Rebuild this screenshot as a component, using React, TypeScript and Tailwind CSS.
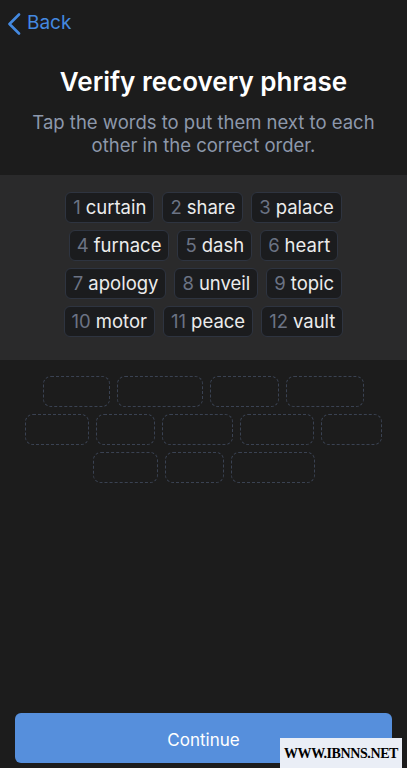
const rows: [number, string][][] = [
  [[1, "curtain"], [2, "share"], [3, "palace"]],
  [[4, "furnace"], [5, "dash"], [6, "heart"]],
  [[7, "apology"], [8, "unveil"], [9, "topic"]],
  [[10, "motor"], [11, "peace"], [12, "vault"]],
];

// widths of the empty drop slots, row by row
const slots = [
  ["w-[67px]", "w-[86px]", "w-[69px]", "w-[78px]"],
  ["w-[64px]", "w-[59px]", "w-[71px]", "w-[74px]", "w-[61px]"],
  ["w-[65px]", "w-[59px]", "w-[84px]"],
];

function WordChip({ n, word }: { n: number; word: string }) {
  return (
    <div className="flex h-[31px] items-center gap-[5px] rounded-md border border-[#2e3440] bg-[#1b1c1e] px-[7px] text-[18.5px] leading-none">
      <span className="text-[#6b7384]">{n}</span>
      <span className="text-[#ececec]">{word}</span>
    </div>
  );
}

export default function App() {
  return (
    <div
      className="relative flex h-[768px] w-full flex-col overflow-hidden bg-[#1c1c1c]"
      style={{ fontFamily: "Inter, 'Noto Sans', sans-serif" }}
    >
      <header className="flex h-[47px] items-center gap-[6px] pl-[7px] text-[#4489e0]">
        <svg width="14" height="22" viewBox="0 0 14 22" fill="none">
          <path
            d="M12 1.5 2.5 11 12 20.5"
            stroke="currentColor"
            strokeWidth="2.6"
            strokeLinecap="round"
            strokeLinejoin="round"
          />
        </svg>
        <span className="text-[19px]">Back</span>
      </header>

      <h1 className="mt-[19px] text-center text-[26px] font-semibold leading-[32px] text-white">
        Verify recovery phrase
      </h1>
      <p className="mx-auto mt-[13px] max-w-[370px] text-center text-[18.5px] leading-[23px] text-[#8d98ab]">
        Tap the words to put them next to each other in the correct order.
      </p>

      <section className="mt-[18px] flex h-[185px] flex-col items-center gap-[7px] bg-[#2a2a2b] pt-[17px]">
        {rows.map((row, i) => (
          <div key={i} className="flex gap-[8px]">
            {row.map(([n, w]) => (
              <WordChip key={n} n={n} word={w} />
            ))}
          </div>
        ))}
      </section>

      <div className="mt-[16px] flex flex-col items-center gap-[7px]">
        {slots.map((row, i) => (
          <div key={i} className="flex gap-[7px]">
            {row.map((w, j) => (
              <div
                key={j}
                className={`${w} h-[31px] rounded-lg border border-dashed border-[#3a4252]`}
              />
            ))}
          </div>
        ))}
      </div>

      <div className="flex-1" />

      <button className="mx-[15px] mb-[5px] h-[50px] rounded-md bg-[#568fdc] pt-[5px] text-[17px] text-white">
        Continue
      </button>

      <div
        className="absolute bottom-0 right-[5px] flex h-[30px] w-[122px] items-center justify-center bg-[#eaeef6] text-[14px] font-bold tracking-[-0.4px] text-black"
        style={{ fontFamily: "'Liberation Serif', serif" }}
      >
        WWW.IBNNS.NET
      </div>
    </div>
  );
}
